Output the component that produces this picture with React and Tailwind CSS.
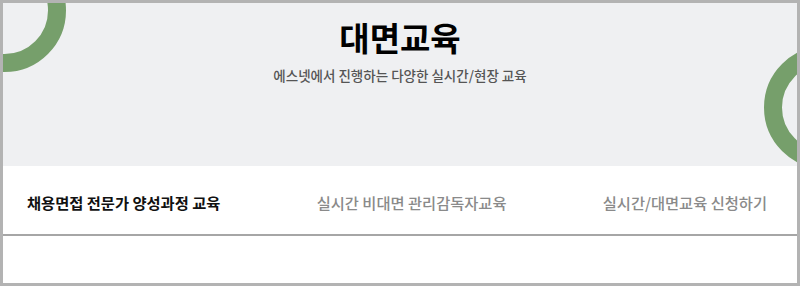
import React from "react";

export default function App() {
  const font = { fontFamily: '"Noto Sans CJK KR", "Noto Sans", sans-serif' };
  return (
    <div
      className="w-[800px] h-[286px] border-[3px] border-[#b3b3b3] bg-white overflow-hidden flex flex-col box-border"
      style={font}
    >
      <div className="relative h-[163px] shrink-0 bg-[#eff0f2] overflow-hidden flex flex-col items-center">
        <div className="absolute left-[-60px] top-[-54px] w-[123px] h-[123px] rounded-full border-[18px] border-[#769f6b]" />
        <div className="absolute right-[-90px] top-[43px] w-[123px] h-[123px] rounded-full border-[18px] border-[#769f6b]" />
        <h1 className="relative mt-[18px] text-[33px] leading-none font-bold text-black">
          대면교육
        </h1>
        <p className="relative mt-[15px] text-[13.5px] leading-none font-medium text-[#555555]">
          에스넷에서 진행하는 다양한 실시간/현장 교육
        </p>
      </div>
      <div className="h-[70px] shrink-0 flex items-start justify-between pl-[24px] pr-[30px] pt-[29px] border-b-2 border-[#a6a6a6]">
        <span className="text-[15.3px] leading-none font-bold text-[#111111]">
          채용면접 전문가 양성과정 교육
        </span>
        <span className="text-[15.3px] leading-none font-medium text-[#8a8a8a]">
          실시간 비대면 관리감독자교육
        </span>
        <span className="text-[15.3px] leading-none font-medium text-[#8a8a8a]">
          실시간/대면교육 신청하기
        </span>
      </div>
      <div className="flex-1" />
    </div>
  );
}
